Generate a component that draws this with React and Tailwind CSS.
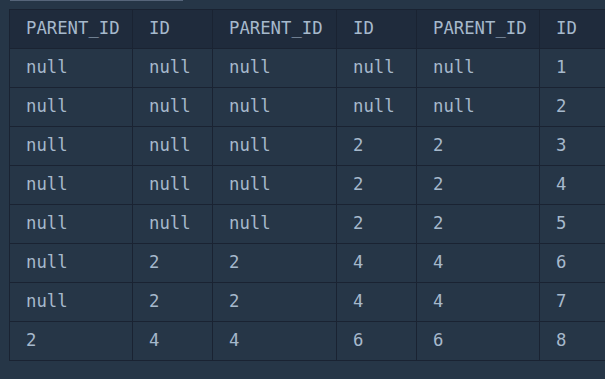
import React from "react";

const headers = ["PARENT_ID", "ID", "PARENT_ID", "ID", "PARENT_ID", "ID"];
const rows = [
  ["null", "null", "null", "null", "null", "1"],
  ["null", "null", "null", "null", "null", "2"],
  ["null", "null", "null", "2", "2", "3"],
  ["null", "null", "null", "2", "2", "4"],
  ["null", "null", "null", "2", "2", "5"],
  ["null", "2", "2", "4", "4", "6"],
  ["null", "2", "2", "4", "4", "7"],
  ["2", "4", "4", "6", "6", "8"],
];
const widths = ["w-[123px]", "w-[80px]", "w-[124px]", "w-[80px]", "w-[123px]", "w-[100px]"];

export default function App() {
  return (
    <div className="relative w-[605px] h-[379px] overflow-hidden bg-[#263647] text-[#a6b9cc] text-[17.3px]" style={{ fontFamily: '"DejaVu Sans Mono", monospace' }}>
      <div className="absolute left-[10px] top-0 w-[173px] h-[1px] bg-[#56657a]" />
      <div className="pl-[9px] pt-[9px]">
        <table className="border-collapse table-fixed w-[630px]">
          <colgroup>
            {widths.map((w, i) => (
              <col key={i} className={w} />
            ))}
          </colgroup>
          <thead>
            <tr className="h-[39px] bg-[#1f2b3c]">
              {headers.map((h, i) => (
                <th key={i} className="border border-[#1a2332] pl-[16px] pr-[10px] text-left font-normal leading-none whitespace-nowrap">
                  {h}
                </th>
              ))}
            </tr>
          </thead>
          <tbody>
            {rows.map((r, ri) => (
              <tr key={ri} className="h-[39px]">
                {r.map((c, ci) => (
                  <td key={ci} className="border border-[#1a2332] pl-[16px] pr-[10px] leading-none whitespace-nowrap">
                    {c}
                  </td>
                ))}
              </tr>
            ))}
          </tbody>
        </table>
      </div>
    </div>
  );
}
